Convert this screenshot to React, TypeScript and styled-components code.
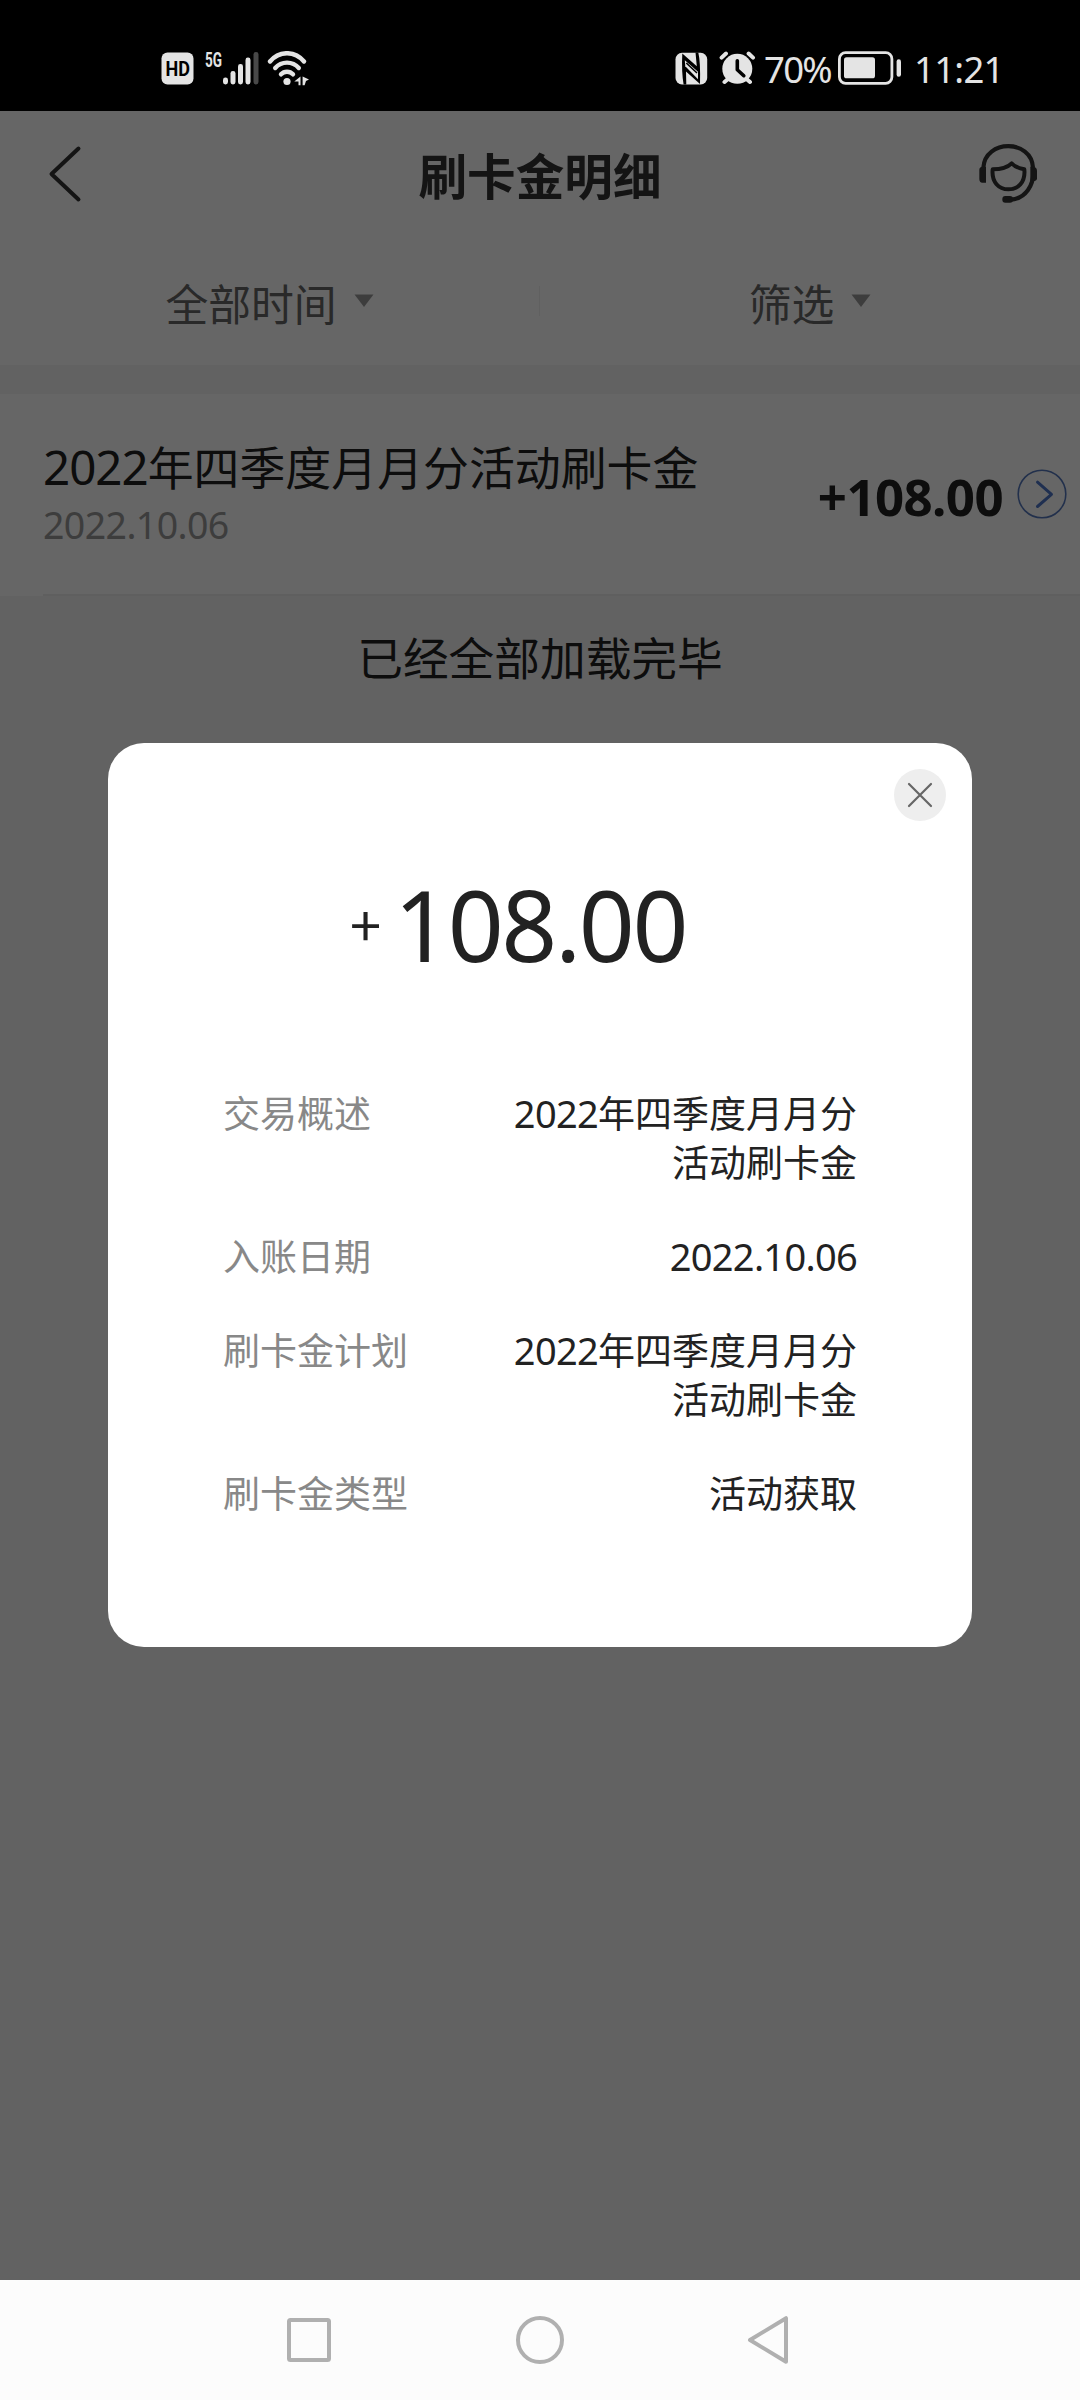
import React from 'react';
import styled, { createGlobalStyle } from 'styled-components';

const GlobalStyle = createGlobalStyle`
  *, *::before, *::after { box-sizing: border-box; }
  body {
    margin: 0;
    background: #f5f5f5;
    font-family: "Noto Sans CJK SC", "Noto Sans", sans-serif;
  }
  svg { display: block; flex: none; }
`;

const numeric = '"Noto Sans", "Noto Sans CJK SC", sans-serif';

const Screen = styled.div`
  width: 1080px;
  height: 2400px;
  display: flex;
  flex-direction: column;
  overflow: hidden;
  background: #f5f5f5;
`;

const StatusBar = styled.header`
  height: 111px;
  flex: none;
  padding: 25px 79px 0 161px;
  display: flex;
  align-items: center;
  justify-content: space-between;
  background: #000;
  color: #e4e4e4;
`;

const StatusGroup = styled.div`
  display: flex;
  align-items: center;
`;

const StatusText = styled.span<{ $spacing: number; $left: number; $width: number }>`
  width: ${p => p.$width}px;
  margin-left: ${p => p.$left}px;
  padding-top: 2px;
  font-family: ${numeric};
  font-size: 36.5px;
  line-height: 52px;
  letter-spacing: ${p => p.$spacing}px;
  white-space: nowrap;
`;

const Page = styled.main`
  position: relative;
  flex: 1;
  display: flex;
  flex-direction: column;
`;

const TitleBar = styled.div`
  height: 126px;
  display: grid;
  grid-template-columns: 1fr auto 1fr;
  align-items: center;
  padding: 0 39px 0 47px;
  background: #fff;
`;

const TitleSide = styled.div<{ $end?: boolean }>`
  display: flex;
  justify-content: ${p => (p.$end ? 'flex-end' : 'flex-start')};
`;

const Title = styled.h1`
  margin: 0 0 0 -8px;
  font-size: 48.6px;
  line-height: 70px;
  font-weight: 700;
  color: #333;
`;

const FilterBar = styled.div`
  height: 129px;
  display: grid;
  grid-template-columns: 1fr 1fr;
  align-items: center;
  background: #fff;
  border-bottom: 1px solid #f6f6f6;
`;

const Filter = styled.button<{ $divided?: boolean }>`
  height: 30px;
  padding: 2px 0 0;
  border: 0;
  border-right: ${p => (p.$divided ? '1px solid #f0f0f0' : '0')};
  background: none;
  display: flex;
  align-items: center;
  justify-content: center;
  gap: 17px;
  font-family: inherit;
  font-size: 42.8px;
  line-height: 60px;
  color: #666;
`;

const Record = styled.section`
  height: 202px;
  margin-top: 28px;
  padding: 38px 13px 0 43px;
  display: flex;
  align-items: flex-start;
  justify-content: space-between;
  background: linear-gradient(#ededed, #ededed) 43px 100% / 1037px 2px no-repeat #fff;
`;

const RecordTitle = styled.div`
  font-size: 45.9px;
  line-height: 66px;
  color: #222;
`;

const RecordDate = styled.div`
  font-family: ${numeric};
  font-size: 37.5px;
  line-height: 54px;
  letter-spacing: -0.6px;
  color: #999;
`;

const RecordAmount = styled.div`
  display: flex;
  align-items: center;
  gap: 14px;
  padding-top: 24px;
`;

const RecordSum = styled.span`
  padding-top: 4px;
  font-family: ${numeric};
  font-size: 51px;
  line-height: 72px;
  letter-spacing: -0.6px;
  font-weight: 700;
  color: #222;
`;

const Digits = styled.span<{ $size: number; $spacing: number }>`
  font-family: ${numeric};
  font-size: ${p => p.$size}px;
  line-height: 1;
  letter-spacing: ${p => p.$spacing}px;
`;

const LoadedHint = styled.p`
  margin: 27px 0 0;
  font-size: 45.7px;
  line-height: 66px;
  text-align: center;
  color: #222;
`;

const Overlay = styled.div`
  position: absolute;
  inset: 0;
  padding-bottom: 1px;
  display: flex;
  align-items: center;
  justify-content: center;
  background: rgba(0, 0, 0, 0.6);
`;

const Dialog = styled.section`
  width: 864px;
  height: 904px;
  border-radius: 36px;
  padding: 26px 26px 0;
  background: #fff;
  color: #222;
`;

const CloseButton = styled.button`
  width: 52px;
  height: 52px;
  margin-left: auto;
  padding: 0;
  border: 0;
  border-radius: 50%;
  display: flex;
  align-items: center;
  justify-content: center;
  background: #eee;
`;

const DialogAmount = styled.div`
  margin-top: 33px;
  padding-left: 216px;
  display: flex;
  align-items: center;
`;

const Sign = styled.span`
  width: 44px;
  padding-bottom: 3px;
  font-size: 56px;
  line-height: 132px;
`;

const Sum = styled.span`
  font-family: ${numeric};
  font-size: 98px;
  line-height: 140px;
  letter-spacing: -2.4px;
`;

const Details = styled.dl`
  margin: 94px 89px 0;
  display: flex;
  flex-direction: column;
  gap: 45px;
`;

const Detail = styled.div`
  display: flex;
  justify-content: space-between;
  font-size: 37px;
  line-height: 49px;
`;

const Label = styled.dt`
  color: #888;
`;

const Value = styled.dd`
  margin: 0;
  max-width: 350px;
  text-align: right;
  color: #222;
`;

const NavBar = styled.nav`
  height: 120px;
  flex: none;
  display: flex;
  align-items: center;
  justify-content: space-between;
  padding: 0 290px 0 286px;
  background: #fcfcfc;
`;

const HdIcon = () => (
  <svg width="33" height="33" viewBox="0 0 33 33">
    <rect x="0.5" y="0.5" width="32" height="32" rx="6" fill="#e4e4e4" />
    <text x="4.5" y="24" textLength="24.5" lengthAdjust="spacingAndGlyphs" fontFamily="Roboto" fontWeight="700" fontSize="20.5" fill="#000">HD</text>
  </svg>
);

const SignalIcon = () => (
  <svg width="56" height="46" viewBox="0 -6 56 46" style={{ marginLeft: 10 }}>
    <text x="1" y="15.5" textLength="17" lengthAdjust="spacingAndGlyphs" fontFamily="Roboto" fontWeight="700" fontSize="20.5" fill="#e4e4e4">5G</text>
    <g fill="#e4e4e4">
      <rect x="19" y="26.5" width="5" height="7" rx="2.4" />
      <rect x="26.5" y="20" width="5" height="13.5" rx="2.4" />
      <rect x="34" y="13" width="5" height="20.5" rx="2.4" />
      <rect x="41.5" y="6.5" width="5" height="27" rx="2.4" />
      <rect x="49.5" y="1" width="5" height="32.5" rx="2.4" fill="#484848" />
    </g>
  </svg>
);

const WifiIcon = () => (
  <svg width="43" height="35" viewBox="0 0 43 35" style={{ marginLeft: 7 }}>
    <g fill="none" stroke="#e4e4e4" strokeWidth="4.4" strokeLinecap="round">
      <path d="M3 10.5C12-0.6 28-0.6 37 10.5" />
      <path d="M8.2 17C14.5 9.8 25.5 9.8 31.8 17" />
      <path d="M14 23.3C17.2 19.8 22.8 19.8 26 23.3" />
    </g>
    <circle cx="20" cy="30.5" r="3.6" fill="#e4e4e4" />
    <path d="M33.5 25.5v8.7h-2v-3.6h-4.2zM35.6 25.5l6.4 3-3 1.6-1.4 4.1h-2z" fill="#e4e4e4" />
  </svg>
);

const NfcIcon = () => (
  <svg width="33" height="33" viewBox="0 0 33 33">
    <rect x="0.5" y="0.8" width="31.7" height="31.6" rx="6.5" fill="#e4e4e4" />
    <path d="M7.3 1.5L21.8 14.2 20.5 0.5H23.3Q25.6 10 25 32L11 19.5 11.3 32.5H8.6Q6.4 20 7.3 1.5Z" fill="#000" />
    <path d="M9.8 8.2L23 19.8V27.2L10.3 14.2Z" fill="#e4e4e4" />
    <path d="M11.3 11L22 21" stroke="#000" strokeWidth="1.6" />
  </svg>
);

const AlarmIcon = () => (
  <svg width="37" height="34" viewBox="0 0 37 34" style={{ marginLeft: 11 }}>
    <g stroke="#e4e4e4" strokeWidth="4" strokeLinecap="round">
      <path d="M2.6 6.6L7 2.5M34 6.6L29.6 2.5M9 28L5.5 31M27.5 28L31 31" />
    </g>
    <circle cx="18.3" cy="17.8" r="15" fill="#e4e4e4" />
    <path d="M18.3 9.7v9l6.5 6" fill="none" stroke="#000" strokeWidth="3.6" strokeLinecap="round" strokeLinejoin="round" />
  </svg>
);

const BatteryIcon = () => (
  <svg width="64" height="34" viewBox="0 0 64 34" style={{ marginLeft: 7 }}>
    <rect x="1.4" y="1.7" width="52.5" height="30.6" rx="6.2" fill="none" stroke="#e4e4e4" strokeWidth="2.8" />
    <rect x="6" y="6.3" width="31" height="21" rx="2.6" fill="#e4e4e4" />
    <rect x="58.6" y="8.3" width="4.4" height="17.4" rx="2.2" fill="#e4e4e4" />
  </svg>
);

const BackIcon = () => (
  <svg width="36" height="58" viewBox="0 0 36 58">
    <path d="M31.5 3.5L4.5 29 31.5 54.5" fill="none" stroke="#333" strokeWidth="4" strokeLinecap="round" strokeLinejoin="round" />
  </svg>
);

const ServiceIcon = () => (
  <svg width="66" height="62" viewBox="14 24 198 186">
    <path d="M39 98C44 12 184 12 188 98C194 152 164 190 122 194" fill="none" stroke="#333" strokeWidth="12.5" />
    <path d="M47 95v48H36Q27 143 27 132V104Q27 95 38 95ZM180 95h11Q200 98 200 108v24Q197 140 180 140Z" fill="#333" />
    <rect x="96" y="183" width="32" height="20" rx="9" fill="#333" />
    <path d="M67 103Q106 103 124 85Q138 99 162 103C166 144 142 163 114 163C86 163 63 142 67 103Z" fill="none" stroke="#333" strokeWidth="12" strokeLinejoin="round" />
  </svg>
);

const CaretIcon = () => (
  <svg width="20" height="14" viewBox="0 0 20 14" style={{ marginTop: -2 }}>
    <path d="M0.5 0.5h19L10 13z" fill="#999" />
  </svg>
);

const EnterIcon = () => (
  <svg width="50" height="50" viewBox="0 0 50 50">
    <circle cx="25" cy="25" r="23.8" fill="none" stroke="#5679bd" strokeWidth="1.6" />
    <path d="M20.5 13.2L34.5 25.3 20.5 37.5" fill="none" stroke="#4e76c8" strokeWidth="3" strokeLinecap="round" strokeLinejoin="round" />
  </svg>
);

const CloseIcon = () => (
  <svg width="26" height="26" viewBox="0 0 26 26">
    <path d="M2 2l22 22M24 2L2 24" stroke="#666" strokeWidth="2.2" strokeLinecap="round" />
  </svg>
);

const RecentsIcon = () => (
  <svg width="46" height="46" viewBox="0 0 46 46">
    <rect x="3" y="3" width="40" height="40" rx="1.5" fill="none" stroke="#b0b0b0" strokeWidth="4" />
  </svg>
);

const HomeIcon = () => (
  <svg width="50" height="50" viewBox="0 0 50 50">
    <circle cx="25" cy="25" r="22" fill="none" stroke="#b0b0b0" strokeWidth="4" />
  </svg>
);

const NavBackIcon = () => (
  <svg width="43" height="50" viewBox="0 0 43 50">
    <path d="M39 3.2V46.8L3 25Z" fill="none" stroke="#b0b0b0" strokeWidth="4" strokeLinejoin="round" />
  </svg>
);

const details: { label: string; number?: string; text?: string }[] = [
  { label: '交易概述', number: '2022', text: '年四季度月月分活动刷卡金' },
  { label: '入账日期', number: '2022.10.06' },
  { label: '刷卡金计划', number: '2022', text: '年四季度月月分活动刷卡金' },
  { label: '刷卡金类型', text: '活动获取' },
];

export default function App() {
  return (
    <>
      <GlobalStyle />
      <Screen>
        <StatusBar>
          <StatusGroup>
            <HdIcon />
            <SignalIcon />
            <WifiIcon />
          </StatusGroup>
          <StatusGroup>
            <NfcIcon />
            <AlarmIcon />
            <StatusText $spacing={-1.7} $left={8} $width={67}>70%</StatusText>
            <BatteryIcon />
            <StatusText $spacing={-0.7} $left={12} $width={87}>11:21</StatusText>
          </StatusGroup>
        </StatusBar>

        <Page>
          <TitleBar>
            <TitleSide><BackIcon /></TitleSide>
            <Title>刷卡金明细</Title>
            <TitleSide $end><ServiceIcon /></TitleSide>
          </TitleBar>
          <FilterBar>
            <Filter $divided>全部时间<CaretIcon /></Filter>
            <Filter>筛选<CaretIcon /></Filter>
          </FilterBar>

          <Record>
            <div>
              <RecordTitle><Digits $size={47.5} $spacing={-1}>2022</Digits>年四季度月月分活动刷卡金</RecordTitle>
              <RecordDate>2022.10.06</RecordDate>
            </div>
            <RecordAmount><RecordSum>+108.00</RecordSum><EnterIcon /></RecordAmount>
          </Record>
          <LoadedHint>已经全部加载完毕</LoadedHint>

          <Overlay>
            <Dialog>
              <CloseButton aria-label="关闭"><CloseIcon /></CloseButton>
              <DialogAmount>
                <Sign>+</Sign>
                <Sum>108.00</Sum>
              </DialogAmount>
              <Details>
                {details.map(d => (
                  <Detail key={d.label}>
                    <Label>{d.label}</Label>
                    <Value>
                      {d.number && <Digits $size={38} $spacing={-0.7}>{d.number}</Digits>}
                      {d.text}
                    </Value>
                  </Detail>
                ))}
              </Details>
            </Dialog>
          </Overlay>
        </Page>

        <NavBar>
          <RecentsIcon />
          <HomeIcon />
          <NavBackIcon />
        </NavBar>
      </Screen>
    </>
  );
}
